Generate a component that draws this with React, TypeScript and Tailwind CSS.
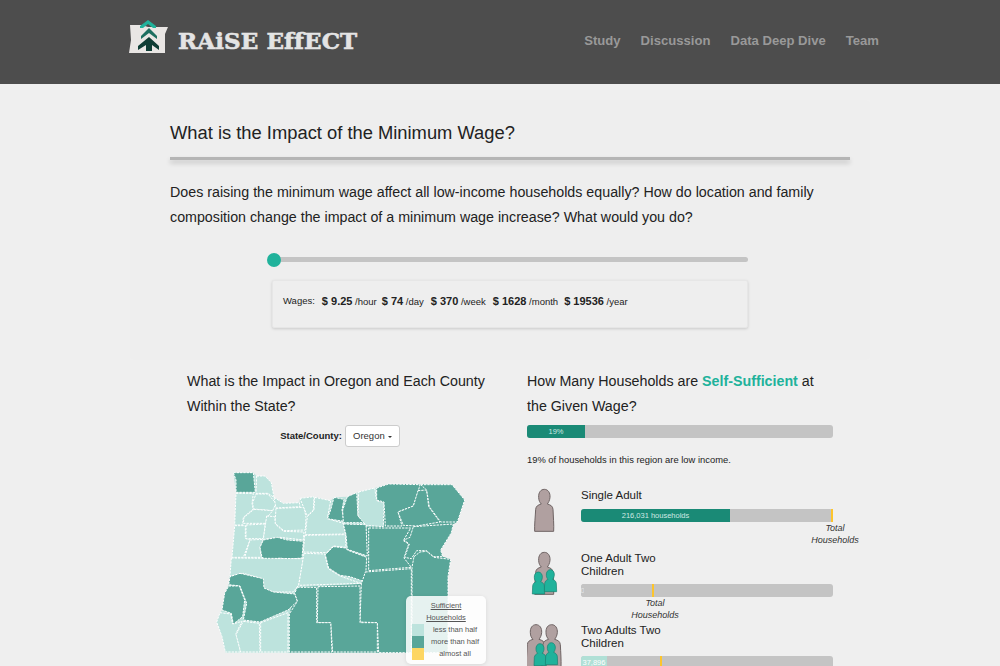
const LIGHT = '#bde3dd';
const DARK = '#59a699';

// county outlines, traced on a 900x618 grid (3x the drawn size)
const counties: { fill: string; points: string }[] = [
  { fill: DARK, points: '100,38 160,38 166,97 108,97 108,60' },
  { fill: LIGHT, points: '170,48 195,48 214,68 222,112 204,100 168,100' },
  { fill: LIGHT, points: '108,100 160,100 156,130 160,147 130,172 128,195 104,195' },
  { fill: LIGHT, points: '168,102 204,102 228,130 218,152 160,147 158,128' },
  { fill: LIGHT, points: '162,148 218,152 205,168 196,190 130,190 132,172' },
  { fill: LIGHT, points: '228,145 312,142 318,172 316,210 252,212 225,190' },
  { fill: LIGHT, points: '222,112 250,130 298,128 300,140 228,144' },
  { fill: LIGHT, points: '300,115 342,110 340,150 322,168 310,140' },
  { fill: LIGHT, points: '344,112 392,122 382,176 430,190 436,222 316,224 322,170 342,150' },
  { fill: LIGHT, points: '104,197 136,197 136,235 150,240 130,292 96,292' },
  { fill: LIGHT, points: '138,195 196,192 190,236 138,236' },
  { fill: LIGHT, points: '200,168 224,170 226,192 250,214 312,216 310,240 240,232 190,238' },
  { fill: LIGHT, points: '150,240 190,238 180,262 184,292 134,292' },
  { fill: DARK, points: '190,240 232,232 262,240 310,244 306,294 260,298 240,294 205,302 186,292 180,262' },
  { fill: LIGHT, points: '314,226 436,224 438,262 400,258 380,278 310,276' },
  { fill: LIGHT, points: '94,294 310,296 296,375 280,396 220,396 190,385 186,356 130,340 90,348' },
  { fill: LIGHT, points: '312,280 374,282 385,326 420,348 482,370 296,376' },
  { fill: DARK, points: '400,260 438,264 442,270 500,292 496,366 450,350 420,346 386,324 376,284' },
  { fill: DARK, points: '402,112 432,118 426,150 432,184 382,176 392,150' },
  { fill: DARK, points: '442,110 470,98 474,168 496,188 430,188 428,150' },
  { fill: LIGHT, points: '476,96 524,84 530,122 552,128 550,200 498,196 474,168' },
  { fill: DARK, points: '430,192 498,194 502,288 442,268 438,224' },
  { fill: DARK, points: '530,84 566,72 660,74 650,110 640,138 594,156 606,198 556,198 552,126 530,120' },
  { fill: DARK, points: '654,92 680,90 686,140 720,186 650,198 610,196 594,156 640,138' },
  { fill: DARK, points: '662,74 756,74 794,120 772,186 722,186 688,140 680,90' },
  { fill: DARK, points: '506,204 632,204 610,242 626,252 612,294 634,322 580,326 506,332' },
  { fill: DARK, points: '640,200 760,192 754,218 722,270 728,290 700,290 680,272 650,272 634,296 614,292 628,252 612,240 630,232' },
  { fill: DARK, points: '642,290 660,276 680,274 702,292 752,298 744,350 744,578 636,578 636,322' },
  { fill: DARK, points: '496,336 634,326 634,578 536,578 532,488 480,486 484,372' },
  { fill: DARK, points: '354,380 480,378 480,488 532,488 532,576 398,576 392,488 352,488' },
  { fill: DARK, points: '292,382 350,382 350,488 392,488 396,576 268,576 268,462 292,424 284,400' },
  { fill: DARK, points: '120,340 190,356 192,384 220,396 284,402 292,424 264,450 180,486 130,480 140,430 120,378 86,374 90,350' },
  { fill: DARK, points: '86,378 118,378 134,420 128,470 100,492 94,460 66,450 74,400' },
  { fill: LIGHT, points: '60,458 92,462 98,492 126,484 108,520 122,576 76,576 66,530 50,486' },
  { fill: LIGHT, points: '130,484 178,490 180,576 122,576 108,524' },
  { fill: LIGHT, points: '182,488 264,458 264,576 182,576' },
];

function OregonMap() {
  return (
    <svg viewBox="0 0 900 618" className="block h-[206px] w-[300px]">
      {/* underlay so the traced counties leave no holes */}
      <polygon
        fill={LIGHT}
        points="100,38 160,38 170,48 195,48 214,68 222,112 250,130 298,128 300,115 342,110 392,122 402,112 442,110 470,98 524,84 566,72 756,74 794,120 772,186 760,192 754,218 722,270 728,290 752,298 744,350 744,578 76,578 66,530 50,486 60,458 66,450 74,400 86,374 96,292 104,197 108,97"
      />
      <polygon
        fill={DARK}
        points="530,84 566,72 756,74 794,120 772,186 760,192 754,218 722,270 728,290 752,298 744,350 744,578 268,578 268,462 292,382 484,372 496,336 500,200 552,198"
      />
      {counties.map(county => (
        <polygon
          key={county.points}
          points={county.points}
          fill={county.fill}
          stroke="#ffffff"
          strokeWidth={3}
          strokeDasharray="7 3"
          strokeLinejoin="round"
        />
      ))}
    </svg>
  );
}

function Logo() {
  return (
    <svg viewBox="0 0 48 44" className="h-[44px] w-[48px]">
      <path d="M2 5 L14 5 L20 7 L40 7 L37 14 L37 33 L1 33 L3 20 Z" fill="#e9e6e4" />
      <path d="M12 6 L20 0 L28 6 L28 8 L25 8 L20 4 L15 8 L12 8 Z" fill="#20b29b" />
      <path d="M13 16 L21 8 L29 16 L29 19 L21 13 L13 19 Z" fill="#1d6f60" />
      <path d="M10 26 L21 17 L31 26 L31 30 L24 25 L24 31 L18 31 L18 25 L10 30 Z" fill="#0f3d35" />
    </svg>
  );
}

function Adult({ x = 0, y = 0 }: { x?: number; y?: number }) {
  return (
    <path
      transform={`translate(${x} ${y})`}
      d="M73 28 C84 28 91 38 90 52 C89 62 85 68 82 72 C92 75 98 78 99 88 C100 110 102 135 101 154 L44 154 C43 135 46 110 47 88 C48 78 54 75 64 72 C60 68 56 62 56 52 C55 38 62 28 73 28 Z"
      fill="#b0a0a0"
      stroke="#6f6464"
      strokeWidth={3}
    />
  );
}

function Child({ x = 0, y = 0 }: { x?: number; y?: number }) {
  return (
    <path
      transform={`translate(${x} ${y})`}
      d="M55 275 C63 275 68 283 67 292 C66 298 64 302 62 304 C68 306 72 310 73 316 L74 341 L37 341 L38 316 C39 310 43 306 48 304 C46 302 43 298 43 292 C42 283 47 275 55 275 Z"
      fill="#20b29b"
      stroke="#17806f"
      strokeWidth={2}
    />
  );
}

function TotalLabel({ left }: { left: number }) {
  return (
    <div
      className="absolute top-[13px] w-[60px] -translate-x-1/2 text-center text-[9px] italic leading-[12px] text-[#333]"
      style={{ left }}
    >
      Total
      <br />
      Households
    </div>
  );
}

function Bar({ label, width, fill, marker, labelX, textClass }: {
  label: string;
  width: number;
  fill: string;
  marker: number;
  labelX: number;
  textClass: string;
}) {
  return (
    <div className="relative h-[13px] w-[252px] rounded-[3px] bg-[#c4c4c4]">
      <div
        className={`flex h-full items-center justify-center overflow-hidden rounded-l-[3px] text-[7.5px] ${textClass}`}
        style={{ width, backgroundColor: fill }}
      >
        {label}
      </div>
      <div className="absolute top-0 h-full w-[2px] bg-[#fdc52c]" style={{ left: marker }} />
      <TotalLabel left={labelX} />
    </div>
  );
}

export default function App() {
  return (
    <div className="h-[666px] overflow-hidden bg-[#efefef] font-['Liberation_Sans',Arial,sans-serif] text-[#222]">
      <header className="flex h-[84px] items-center justify-between bg-[#4d4d4d] pl-[128px] pr-[121px]">
        <div className="flex items-center gap-[2px]">
          <Logo />
          <span className="pb-[2px] font-['DejaVu_Serif',serif] text-[23px] font-bold tracking-[0.1px] text-[#e4e4e4] [-webkit-text-stroke:0.6px_#e4e4e4]">
            RAiSE EffECT
          </span>
        </div>
        <nav className="flex gap-[20px] pb-[2px] text-[13.1px] font-bold text-[#999]">
          <span>Study</span>
          <span>Discussion</span>
          <span>Data Deep Dive</span>
          <span>Team</span>
        </nav>
      </header>

      <main className="mx-auto w-[740px] pt-[16px]">
        <section className="h-[260px] rounded-[4px] bg-[#eee] pl-[40px] pr-[20px] pt-[20px]">
          <h1 className="text-[18.35px] leading-[26px]">What is the Impact of the Minimum Wage?</h1>
          <div className="mt-[11px] h-[3px] bg-[#b5b5b5] shadow-[0_3px_5px_rgba(0,0,0,0.2)]" />
          <p className="mt-[20px] text-[14.25px] leading-[25px]">
            Does raising the minimum wage affect all low-income households equally? How do location and family
            composition change the impact of a minimum wage increase? What would you do?
          </p>
          <div className="ml-[104px] mt-[27px] w-[474px] rounded-full">
            <div className="relative h-[5px] rounded-full bg-[#c4c4c4]">
              <div className="absolute left-[-7px] top-[-4px] h-[14px] w-[14px] rounded-full bg-[#20b29b]" />
            </div>
          </div>
          <div className="ml-[102px] mt-[18px] flex h-[48px] w-[476px] items-center rounded-[2px] border border-[#e6e6e6] bg-[#eee] pb-[6px] pl-[10px] text-[9.5px] shadow-[0_1px_3px_rgba(0,0,0,0.15)]">
            <span className="mr-[7px]">Wages:</span>
            <span className="mr-[5px]"><b className="text-[11px]">$ 9.25</b> /hour</span>
            <span className="mr-[7px]"><b className="text-[11px]">$ 74</b> /day</span>
            <span className="mr-[7px]"><b className="text-[11px]">$ 370</b> /week</span>
            <span className="mr-[6px]"><b className="text-[11px]">$ 1628</b> /month</span>
            <span><b className="text-[11px]">$ 19536</b> /year</span>
          </div>
        </section>

        <div className="ml-[40px] mr-[20px] grid grid-cols-2 pt-[9px]">
          <section className="px-[17px]">
            <h2 className="text-[14.25px] leading-[25px]">What is the Impact in Oregon and Each County Within the State?</h2>
            <div className="mt-[6px] flex items-center justify-center gap-[3px]">
              <span className="text-[9.5px] font-bold">State/County:</span>
              <div className="flex h-[22px] w-[55px] items-center justify-center gap-[3px] rounded-[3px] border border-[#ccc] bg-white text-[9.5px] text-[#333]">
                Oregon
                <span className="mt-[1px] border-x-[2px] border-t-[2px] border-x-transparent border-t-[#333]" />
              </div>
            </div>
            <div className="relative ml-[13px] mt-[13px] h-[206px] w-[300px]">
              <OregonMap />
              <div className="absolute left-[206px] top-[136px] h-[68px] w-[80px] rounded-[5px] bg-white/85 pt-[4px] text-center text-[7.5px] leading-[12px] text-[#555] shadow-[0_1px_4px_rgba(0,0,0,0.1)]">
                <div className="underline">Sufficient</div>
                <div className="underline">Households</div>
                <div className="flex">
                  <span className="ml-[6px] h-[12px] w-[12px] bg-[#bde3dd]" />
                  <span className="flex-1">less than half</span>
                </div>
                <div className="flex">
                  <span className="ml-[6px] h-[12px] w-[12px] bg-[#59a699]" />
                  <span className="flex-1">more than half</span>
                </div>
                <div className="flex">
                  <span className="ml-[6px] h-[12px] w-[12px] bg-[#fdd663]" />
                  <span className="flex-1">almost all</span>
                </div>
              </div>
            </div>
          </section>

          <section className="px-[17px]">
            <h2 className="text-[14.25px] leading-[25px]">
              How Many Households are <b className="text-[#20b29b]">Self-Sufficient</b> at the Given Wage?
            </h2>
            <div className="mt-[6px] h-[13px] w-[306px] rounded-[3px] bg-[#c4c4c4]">
              <div className="flex h-full w-[58px] items-center justify-center rounded-l-[3px] bg-[#1a8a76] text-[7.5px] text-[#cfe9e3]">
                19%
              </div>
            </div>
            <p className="mt-[16px] text-[9.4px] leading-[12px]">19% of households in this region are low income.</p>

            <div className="mt-[22px] flex h-[64px] items-start">
              <svg viewBox="21 24 162 135" className="h-[45px] w-[54px] shrink-0">
                <Adult />
              </svg>
              <div className="pt-[1px]">
                <div className="text-[11.5px] leading-[13px]">Single Adult</div>
                <div className="mt-[7px]">
                  <Bar label="216,031 households" width={149} fill="#1a8a76" marker={250} labelX={254} textClass="text-[#cfe9e3]" />
                </div>
              </div>
            </div>

            <div className="flex h-[72px] items-start">
              <svg viewBox="21 212 162 135" className="-mt-[1px] h-[45px] w-[54px] shrink-0">
                <Adult y={188} />
                <Child />
                <Child x={36} y={-7} />
              </svg>
              <div>
                <div className="w-[100px] text-[11.5px] leading-[13px]">One Adult Two Children</div>
                <div className="mt-[6px]">
                  <Bar label="0" width={3} fill="#c4c4c4" marker={71} labelX={74} textClass="text-[#e5e5e5]" />
                </div>
              </div>
            </div>

            <div className="flex items-start">
              <svg viewBox="21 428 162 135" className="-mt-[1px] h-[45px] w-[54px] shrink-0">
                <Adult x={-25} y={405} />
                <Adult x={22} y={405} />
                <Child x={5} y={215} />
                <Child x={39} y={212} />
              </svg>
              <div>
                <div className="w-[100px] text-[11.5px] leading-[13px]">Two Adults Two Children</div>
                <div className="mt-[6px]">
                  <Bar label="37,896" width={26} fill="#b0e0d6" marker={79} labelX={82} textClass="text-white" />
                </div>
              </div>
            </div>
          </section>
        </div>
      </main>
    </div>
  );
}
